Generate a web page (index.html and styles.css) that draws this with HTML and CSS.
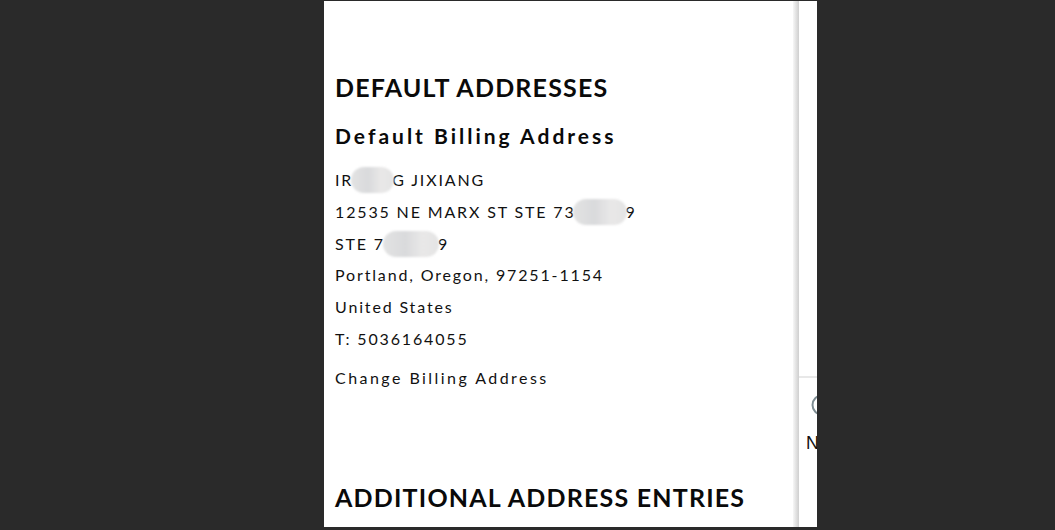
FILE: index.html
```html
<!DOCTYPE html>
<html>
<head>
<meta charset="utf-8">
<link rel="stylesheet" href="styles.css">
</head>
<body>
<div class="stage">
  <div class="panel">
    <main class="main">
      <h2 class="title">DEFAULT ADDRESSES</h2>
      <h3 class="subtitle">Default Billing Address</h3>
      <address class="addr">
        <div class="line">IR<span class="blur b1"></span>G JIXIANG</div>
        <div class="line">12535 NE MARX ST STE 73<span class="blur b2"></span>9</div>
        <div class="line">STE 7<span class="blur b3"></span>9</div>
        <div class="line">Portland, Oregon, 97251-1154</div>
        <div class="line">United States</div>
        <div class="line">T: 5036164055</div>
      </address>
      <a class="change">Change Billing Address</a>
      <h2 class="title title2">ADDITIONAL ADDRESS ENTRIES</h2>
    </main>
    <div class="shadow"></div>
    <aside class="side">
      <div class="side-inner">
        <div class="side-rule"></div>
        <svg class="side-icon" width="24" height="24" viewBox="0 0 24 24"><circle cx="12" cy="12" r="9.5" fill="none" stroke="#7d8c92" stroke-width="2"/></svg>
        <div class="side-text">New</div>
      </div>
    </aside>
  </div>
</div>
</body>
</html>
```
FILE: styles.css
```css
html, body { margin: 0; padding: 0; }
body { background: #2a2a2a; width: 1055px; height: 530px; overflow: hidden; }
.stage { padding: 1px 0 0 324px; }
.panel {
  width: 493px; height: 526px; background: #fff;
  display: flex; overflow: hidden;
}
.main {
  width: 469px; flex: none; padding-left: 11px; box-sizing: border-box;
  font-family: "Lato", "DejaVu Sans", sans-serif; color: #111;
}
.title {
  margin: 70px 0 0; font-size: 25px; font-weight: 700; letter-spacing: 1.2px;
  line-height: 32px; color: #0a0a0a;
}
.subtitle {
  margin: 19px 0 0; font-size: 21px; font-weight: 700; letter-spacing: 3px;
  line-height: 28px; color: #0a0a0a;
}
.addr { font-style: normal; margin-top: 14px; }
.line {
  font-size: 16px; letter-spacing: 1.85px; line-height: 31.8px; height: 31.8px; white-space: nowrap;
}
.blur {
  display: inline-block; vertical-align: middle; height: 26px; margin-top: -4px;
  background: linear-gradient(90deg, #e3e3e3, #d9dadc 40%, #e9e8e8 70%, #e4e4e4);
  border-radius: 13px; filter: blur(1px);
}
.b1 { width: 43px; margin-left: -2px; margin-right: -2px; }
.b2 { width: 54px; margin-left: -3px; margin-right: -1px; }
.b3 { width: 56px; margin-left: -2px; margin-right: -1px; }
.change {
  display: block; margin-top: 12px; font-size: 16px; letter-spacing: 2.45px; line-height: 22px; color: #111;
}
.title2 { margin-top: 92px; }
.shadow {
  width: 6px; flex: none;
  background: linear-gradient(90deg, #f7f7f7, #e2e2e2 50%, #cfcfcf);
}
.side { width: 18px; flex: none; overflow: hidden; background: #fff; }
.side-inner { width: 200px; padding-top: 375px; }
.side-rule { height: 2px; background: #e8e8e8; }
.side-icon { display: block; margin: 15px 0 0 11px; }
.side-text {
  margin: 16px 0 0 7px; font-family: "Liberation Sans", sans-serif; font-size: 18px; color: #111;
}
```
